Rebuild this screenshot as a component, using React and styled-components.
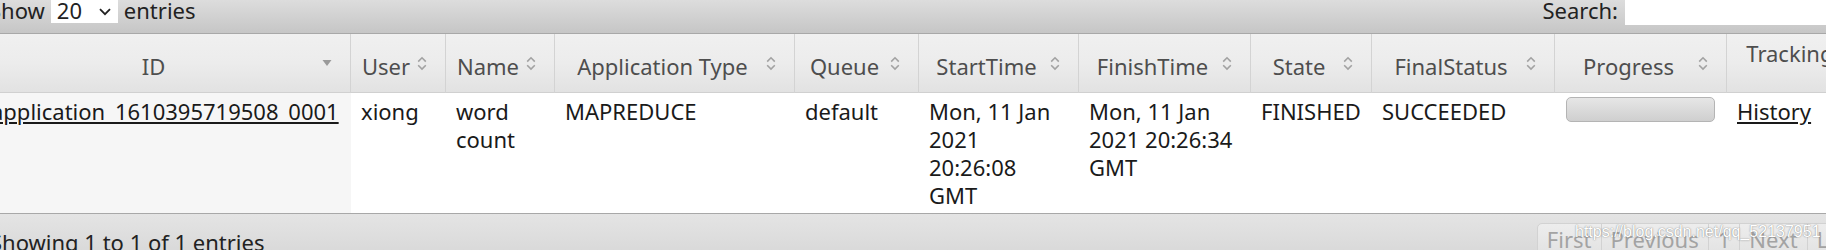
import React from 'react'
import styled, { createGlobalStyle } from 'styled-components'

const GlobalStyle = createGlobalStyle`
  html, body {
    margin: 0;
    padding: 0;
    background: #fff;
    overflow: hidden;
  }
`

const Page = styled.div`
  width: 1934px;
  margin: -8px 0 0 -19px;
  font-family: "Noto Sans", "Open Sans", sans-serif;
  font-size: 22px;
  line-height: 28px;
  color: #222;
`

const TopBar = styled.div`
  display: flex;
  justify-content: space-between;
  align-items: flex-start;
  box-sizing: border-box;
  height: 42px;
  padding-left: 8px;
  background: linear-gradient(#e2e2e2, #c6c6c6);
  border-bottom: 1px solid #a8a8a8;
`

const Group = styled.div`
  display: flex;
  align-items: flex-start;
  gap: ${p => p.$gap}px;
`

const BarText = styled.span`
  padding-top: 4px;
  white-space: nowrap;
`

const FakeSelect = styled.div`
  display: flex;
  justify-content: space-between;
  align-items: flex-start;
  box-sizing: border-box;
  width: 67px;
  height: 30px;
  margin-top: 1px;
  padding: 3px 7px 0 6px;
  background: #fff;
`

const Chevron = styled.svg`
  margin-top: 12px;
`

const SearchBox = styled.div`
  width: 290px;
  height: 32px;
  margin-top: 1px;
  background: #fff;
`

const Table = styled.table`
  width: 1934px;
  table-layout: fixed;
  border-collapse: separate;
  border-spacing: 0;
`

const Col = styled.col`
  width: ${p => p.$w}px;
`

const HeadCell = styled.th`
  padding: 0;
  font-weight: normal;
  color: #4e4e4e;
  vertical-align: top;
  background: linear-gradient(#f0f0f0 0%, #ececec 50%, #e2e2e2 100%);
  border-right: 1px solid #d3d3d3;
  border-bottom: 1px solid #d0d0d0;
`

const HeadInner = styled.div`
  display: flex;
  align-items: ${p => (p.$top ? 'flex-start' : 'center')};
  gap: 6px;
  box-sizing: border-box;
  height: 58px;
  padding: 5px 18px 0 ${p => (p.$top ? 2 : 10)}px;
`

const HeadLabel = styled.span`
  flex: 1;
  min-width: 0;
  text-align: center;
  white-space: nowrap;
`

const SortIcon = styled.svg`
  flex: none;
  margin-bottom: 6px;
`

const Cell = styled.td`
  padding: 4px 10px;
  vertical-align: top;
  background: ${p => (p.$sorted ? '#f6f6f6' : '#fff')};
  color: #1a1a1a;
`

const Link = styled.a`
  color: inherit;
  text-decoration: underline;
  white-space: nowrap;
`

const ProgressBar = styled.div`
  box-sizing: border-box;
  width: 149px;
  height: 25px;
  margin-left: 1px;
  border: 1px solid #b4b4b4;
  border-radius: 5px;
  background: linear-gradient(#e6e6e6, #cfcfcf);
`

const Footer = styled.div`
  position: relative;
  display: flex;
  justify-content: space-between;
  align-items: flex-start;
  height: 60px;
  padding: 9px 46px 0 9px;
  border-top: 1px solid #a8a8a8;
  background: linear-gradient(#e4e4e4, #d0d0d0);
`

const Info = styled.div`
  padding-top: 5px;
  white-space: nowrap;
`

const Pager = styled.div`
  display: flex;
`

const PageButton = styled.span`
  padding: 1px 9px 8px;
  margin-left: -1px;
  border: 1px solid #d2d2d2;
  background: linear-gradient(#ededed, #e0e0e0);
  color: #a3a3a3;
  white-space: nowrap;

  &:first-child {
    border-top-left-radius: 5px;
  }
  &:last-child {
    border-top-right-radius: 5px;
  }
`

const Watermark = styled.div`
  position: absolute;
  left: 1594px;
  top: 10px;
  font-family: "Liberation Sans", Arial, sans-serif;
  font-size: 16px;
  line-height: 16px;
  color: #fff;
  text-shadow: 0 0 1px rgba(60, 60, 60, 0.55), 0 0 2px rgba(80, 80, 80, 0.3);
  white-space: nowrap;
  pointer-events: none;
`

const columns = [
  { title: 'ID', width: 370, sort: 'desc' },
  { title: 'User', width: 95 },
  { title: 'Name', width: 109 },
  { title: 'Application Type', width: 240 },
  { title: 'Queue', width: 124 },
  { title: 'StartTime', width: 160 },
  { title: 'FinishTime', width: 172 },
  { title: 'State', width: 121 },
  { title: 'FinalStatus', width: 183 },
  { title: 'Progress', width: 172 },
  { title: 'Tracking UI', width: 188, top: true }
]

function SortGlyph ({ dir }) {
  if (dir === 'desc') {
    return (
      <SortIcon width='10' height='16' viewBox='0 0 10 16'>
        <polygon points='0.5,5 9.5,5 5,11' fill='#9a9a9a' />
      </SortIcon>
    )
  }
  return (
    <SortIcon width='10' height='16' viewBox='0 0 10 16'>
      <path d='M1.2 6.6 L5 2.8 L8.8 6.6 M1.2 10.2 L5 14 L8.8 10.2' fill='none' stroke='#a2a2a2' strokeWidth='1.6' />
    </SortIcon>
  )
}

function App () {
  return (
    <Page>
      <GlobalStyle />
      <TopBar>
        <Group $gap={6}>
          <BarText>Show</BarText>
          <FakeSelect>
            <span>20</span>
            <Chevron width='12' height='8' viewBox='0 0 12 8'>
              <path d='M1 1.2 L6 6.2 L11 1.2' fill='none' stroke='#222' strokeWidth='1.8' />
            </Chevron>
          </FakeSelect>
          <BarText>entries</BarText>
        </Group>
        <Group $gap={7}>
          <BarText>Search:</BarText>
          <SearchBox />
        </Group>
      </TopBar>

      <Table>
        <colgroup>
          {columns.map(c => <Col key={c.title} $w={c.width} />)}
        </colgroup>
        <thead>
          <tr>
            {columns.map(c => (
              <HeadCell key={c.title}>
                <HeadInner $top={c.top}>
                  <HeadLabel>{c.title}</HeadLabel>
                  <SortGlyph dir={c.sort} />
                </HeadInner>
              </HeadCell>
            ))}
          </tr>
        </thead>
        <tbody>
          <tr>
            <Cell $sorted><Link href='#'>application_1610395719508_0001</Link></Cell>
            <Cell>xiong</Cell>
            <Cell>word count</Cell>
            <Cell>MAPREDUCE</Cell>
            <Cell>default</Cell>
            <Cell>Mon, 11 Jan 2021 20:26:08 GMT</Cell>
            <Cell>Mon, 11 Jan 2021 20:26:34 GMT</Cell>
            <Cell>FINISHED</Cell>
            <Cell>SUCCEEDED</Cell>
            <Cell><ProgressBar /></Cell>
            <Cell><Link href='#'>History</Link></Cell>
          </tr>
        </tbody>
      </Table>

      <Footer>
        <Info>Showing 1 to 1 of 1 entries</Info>
        <Pager>
          <PageButton>First</PageButton>
          <PageButton>Previous</PageButton>
          <PageButton>1</PageButton>
          <PageButton>Next</PageButton>
          <PageButton>Last</PageButton>
        </Pager>
        <Watermark>https://blog.csdn.net/qq_52137951</Watermark>
      </Footer>
    </Page>
  )
}

export default App
